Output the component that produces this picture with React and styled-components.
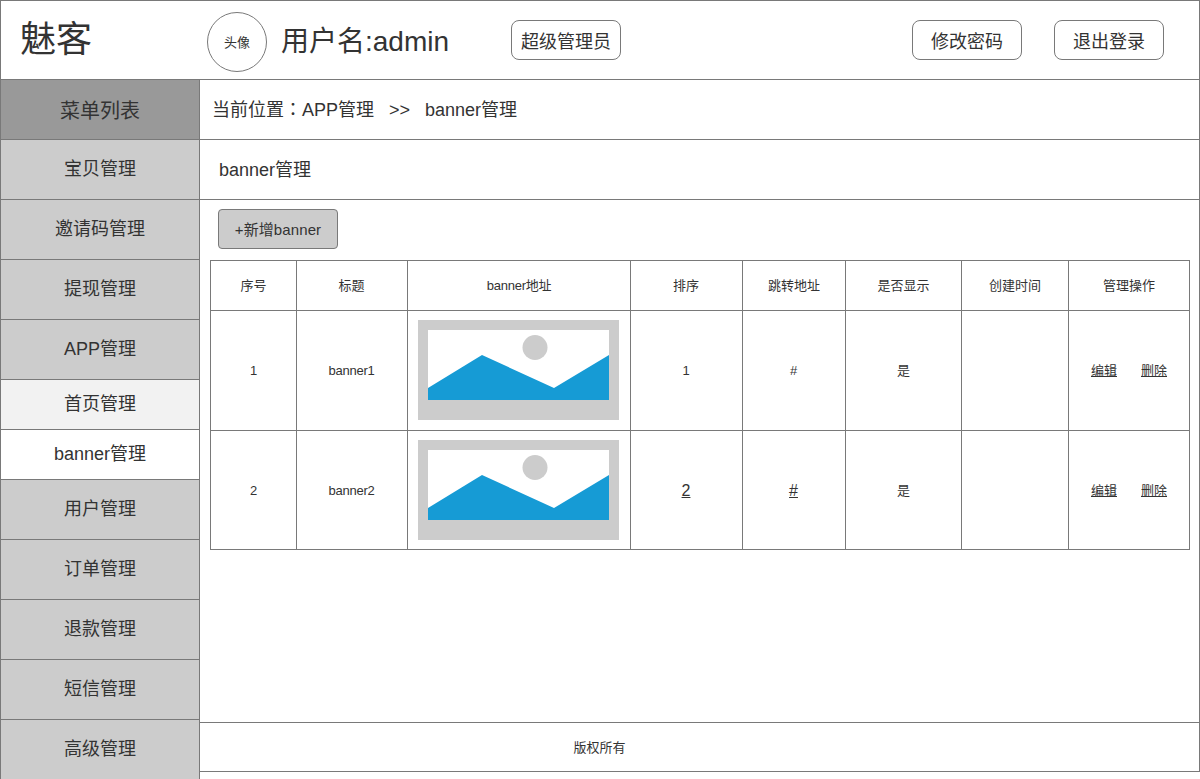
import React from 'react';
import styled, { createGlobalStyle } from 'styled-components';

const LINE = '#797979';

const GlobalStyle = createGlobalStyle`
  html, body {
    margin: 0;
    padding: 0;
    background: #fff;
    overflow: hidden;
  }
  body {
    font-family: "Liberation Sans", "Noto Sans CJK SC", sans-serif;
    color: #333;
  }
  * {
    box-sizing: border-box;
  }
`;

const Page = styled.div`
  width: 1200px;
  height: 779px;
  display: flex;
  flex-direction: column;
  overflow: hidden;
`;

const Header = styled.header`
  height: 80px;
  flex: none;
  display: flex;
  align-items: center;
  border: 1px solid ${LINE};
  padding-left: 19px;
`;

const Logo = styled.div`
  width: 187px;
  padding-bottom: 8px;
  font-size: 36px;
`;

const Avatar = styled.div`
  width: 60px;
  height: 60px;
  margin-top: 4px;
  padding-bottom: 2px;
  border: 1px solid ${LINE};
  border-radius: 50%;
  display: flex;
  align-items: center;
  justify-content: center;
  font-size: 13px;
`;

const UserName = styled.div`
  width: 230px;
  margin-left: 14px;
  padding-bottom: 2px;
  font-size: 28px;
`;

const HeaderButton = styled.div`
  width: 110px;
  height: 40px;
  margin-left: ${(p) => p.$gap || 0}px;
  border: 1px solid ${LINE};
  border-radius: 8px;
  display: flex;
  align-items: center;
  justify-content: center;
  font-size: 18px;
`;

const Body = styled.div`
  flex: 1;
  display: flex;
  min-height: 0;
`;

const Sidebar = styled.nav`
  width: 200px;
  flex: none;
  border-left: 1px solid ${LINE};
  border-right: 1px solid ${LINE};
`;

const MenuItem = styled.div`
  height: ${(p) => (p.$sub ? 50 : 60)}px;
  display: flex;
  align-items: center;
  justify-content: center;
  padding-bottom: ${(p) => (p.$head ? 0 : 5)}px;
  border-bottom: 1px solid ${LINE};
  font-size: ${(p) => (p.$head ? 20 : 18)}px;
  background: ${(p) => p.$bg || '#ccc'};
`;

const Main = styled.main`
  flex: 1;
  align-self: flex-start;
  display: flex;
  flex-direction: column;
  border-right: 1px solid ${LINE};
`;

const Bar = styled.div`
  height: 60px;
  flex: none;
  display: flex;
  align-items: center;
  padding-left: ${(p) => p.$inset}px;
  padding-bottom: 4px;
  border-bottom: 1px solid ${LINE};
  font-size: 18px;
  white-space: pre;
`;

/* TC cut of the font keeps the fullwidth colon centred in its box */
const Colon = styled.span`
  font-family: "Noto Sans CJK TC", sans-serif;
`;

const Content = styled.div`
  height: 523px;
  flex: none;
  padding: 9px 0 0 10px;
  border-bottom: 1px solid ${LINE};
`;

const AddButton = styled.div`
  width: 120px;
  height: 40px;
  margin-left: 8px;
  margin-bottom: 11px;
  padding-bottom: 1px;
  border: 1px solid ${LINE};
  border-radius: 4px;
  background: #ccc;
  display: flex;
  align-items: center;
  justify-content: center;
  font-size: 15px;
  letter-spacing: 0.1px;
`;

const Table = styled.table`
  width: 979px;
  table-layout: fixed;
  border-collapse: collapse;
  font-size: 13px;
  text-align: center;

  th, td {
    border: 1px solid ${LINE};
    padding: 0;
    font-weight: normal;
  }

  th, td:nth-child(6), td:nth-child(8) {
    padding-bottom: 2px;
  }

  th:nth-child(2), td:nth-child(2),
  th:nth-child(4), td:nth-child(4),
  td:nth-child(5) {
    padding-right: 1px;
  }

  th:nth-child(3), td:nth-child(2) {
    letter-spacing: -0.25px;
  }
`;

const ImageCell = styled.td`
  vertical-align: top;
`;

const Thumb = styled.svg`
  display: block;
  margin: 9px 0 0 10px;
`;

const Linked = styled.span`
  text-decoration: underline;
  font-size: 13px;
`;

const BigLink = styled(Linked)`
  display: inline-block;
  padding-top: 2px;
  font-size: 16px;
`;

const Actions = styled.div`
  display: flex;
  justify-content: center;
  gap: 24px;
`;

const Footer = styled.footer`
  height: 49px;
  flex: none;
  display: flex;
  align-items: center;
  justify-content: center;
  padding-right: 200px;
  padding-bottom: 2px;
  border-bottom: 1px solid ${LINE};
  font-size: 13px;
`;

const columns = [86, 111, 223, 112, 103, 116, 107, 121];
const headings = ['序号', '标题', 'banner地址', '排序', '跳转地址', '是否显示', '创建时间', '管理操作'];

const topMenu = ['宝贝管理', '邀请码管理', '提现管理', 'APP管理'];
const bottomMenu = ['用户管理', '订单管理', '退款管理', '短信管理', '高级管理'];

const banners = [
  { id: 1, name: 'banner1', height: 120 },
  { id: 2, name: 'banner2', height: 119, linked: true },
];

function Placeholder() {
  return (
    <Thumb width="201" height="100" viewBox="0 0 201 100">
      <rect width="201" height="100" fill="#ccc" />
      <rect x="10" y="10" width="181" height="70" fill="#fff" />
      <circle cx="117" cy="27.5" r="12.5" fill="#ccc" />
      <polygon points="10,68 64,35 136,68 191,35 191,80 10,80" fill="#169bd5" />
    </Thumb>
  );
}

export default function App() {
  return (
    <Page>
      <GlobalStyle />
      <Header>
        <Logo>魅客</Logo>
        <Avatar>头像</Avatar>
        <UserName>用户名:admin</UserName>
        <HeaderButton>超级管理员</HeaderButton>
        <HeaderButton $gap={291}>修改密码</HeaderButton>
        <HeaderButton $gap={32}>退出登录</HeaderButton>
      </Header>
      <Body>
        <Sidebar>
          <MenuItem $head $bg="#999">菜单列表</MenuItem>
          {topMenu.map((m) => <MenuItem key={m}>{m}</MenuItem>)}
          <MenuItem $sub $bg="#f2f2f2">首页管理</MenuItem>
          <MenuItem $sub $bg="#fff">banner管理</MenuItem>
          {bottomMenu.map((m) => <MenuItem key={m}>{m}</MenuItem>)}
        </Sidebar>
        <Main>
          <Bar $inset={12}>当前位置<Colon>：</Colon>APP管理   &gt;&gt;   banner管理</Bar>
          <Bar $inset={19}>banner管理</Bar>
          <Content>
            <AddButton>+新增banner</AddButton>
            <Table>
              <colgroup>
                {columns.map((w, i) => <col key={i} width={w} />)}
              </colgroup>
              <thead>
                <tr style={{ height: 50 }}>
                  {headings.map((h) => <th key={h}>{h}</th>)}
                </tr>
              </thead>
              <tbody>
                {banners.map((b) => (
                  <tr key={b.id} style={{ height: b.height }}>
                    <td>{b.id}</td>
                    <td>{b.name}</td>
                    <ImageCell><Placeholder /></ImageCell>
                    <td>{b.linked ? <BigLink>{b.id}</BigLink> : b.id}</td>
                    <td>{b.linked ? <BigLink>#</BigLink> : '#'}</td>
                    <td>是</td>
                    <td></td>
                    <td>
                      <Actions>
                        <Linked>编辑</Linked>
                        <Linked>删除</Linked>
                      </Actions>
                    </td>
                  </tr>
                ))}
              </tbody>
            </Table>
          </Content>
          <Footer>版权所有</Footer>
        </Main>
      </Body>
    </Page>
  );
}
